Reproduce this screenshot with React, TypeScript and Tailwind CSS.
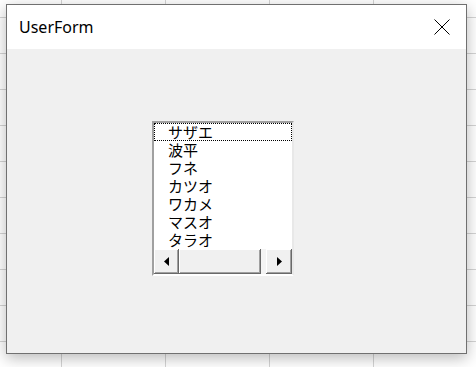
import React from "react";

const names = ["サザエ", "波平", "フネ", "カツオ", "ワカメ", "マスオ", "タラオ"];

const raised =
	"bg-[#f0f0f0] shadow-[inset_-1px_-1px_0_#696969,inset_1px_1px_0_#ffffff,inset_-2px_-2px_0_#a0a0a0,inset_2px_2px_0_#f0f0f0]";

const ListBox = () => (
	<div className="w-[142px] h-[155px] flex flex-col bg-white border-t-2 border-l-2 border-t-[#a0a0a0] border-l-[#a0a0a0] border-r-2 border-b-2 border-r-[#e8e8e8] border-b-[#ffffff]">
		<div className="flex-1 flex flex-col font-['Noto_Sans_CJK_JP',sans-serif] text-[15px] leading-[18px] text-black">
			{names.map((n, i) => (
				<div
					key={n}
					className={
						"h-[18px] pl-[14px] whitespace-nowrap " +
						(i === 0 ? "outline outline-1 outline-dotted outline-black -outline-offset-1" : "")
					}
				>
					{n}
				</div>
			))}
		</div>
		{/* horizontal scrollbar */}
		<div className="h-[25px] flex bg-[#f4f4f4]">
			<div className={"w-[25px] flex items-center justify-center " + raised}>
				<svg width="5" height="9" viewBox="0 0 5 9">
					<polygon points="5,0 0,4.5 5,9" fill="#000" />
				</svg>
			</div>
			<div className={"w-[82px] " + raised} />
			<div className="flex-1" />
			<div className={"w-[26px] flex items-center justify-center " + raised}>
				<svg width="5" height="9" viewBox="0 0 5 9">
					<polygon points="0,0 5,4.5 0,9" fill="#000" />
				</svg>
			</div>
		</div>
	</div>
);

export default function App() {
	return (
		<div className="w-[476px] h-[367px] overflow-hidden bg-white [background-image:linear-gradient(to_right,#d4d4d4_1px,transparent_1px),linear-gradient(to_bottom,#d4d4d4_1px,transparent_1px)] [background-size:104px_36px] [background-position:61px_17px] pt-[4px] pl-[6px]">
			<div className="w-[461px] h-[350px] flex flex-col border border-[#707070] shadow-[0_4px_14px_rgba(0,0,0,0.28)]">
				<div className="h-[44px] bg-white flex items-center justify-between pl-[12px] pr-[16px]">
					<span className="font-['Noto_Sans',sans-serif] text-[16px] text-black">UserForm</span>
					<svg width="16" height="16" viewBox="0 0 16 16">
						<path d="M0.5 0.5 L15.5 15.5 M15.5 0.5 L0.5 15.5" stroke="#000" strokeWidth="1" fill="none" />
					</svg>
				</div>
				<div className="flex-1 bg-[#f0f0f0] pl-[145px] pt-[72px]">
					<ListBox />
				</div>
			</div>
		</div>
	);
}
